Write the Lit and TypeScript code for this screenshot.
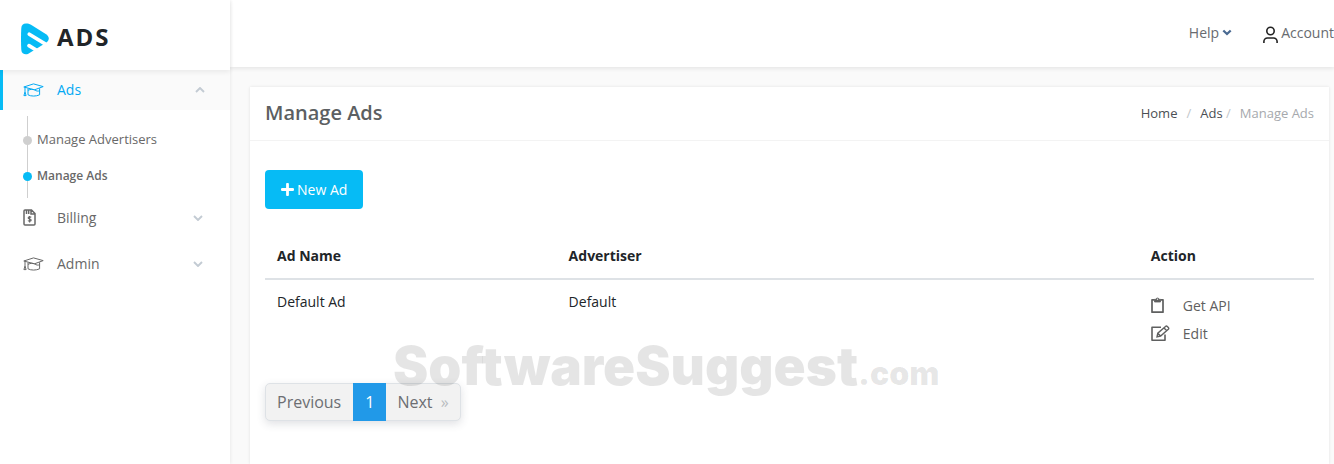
import { LitElement, html, css, svg } from "lit";
import { customElement, property } from "lit/decorators.js";

const iconPaths: Record<string, { box: string; w: number; h: number; body: unknown }> = {
  cap: {
    box: "0 0 21 14", w: 21, h: 14,
    body: svg`<path d="M.8 4 10.500.9l9.700 2.700-8.700 3.200z"/><path d="M5 5.500v6.300c3 1.700 8 1.700 11.600 0V5.300"/><path d="M5 7.300c2.800-1.300 4.500-1 6.500-.5 2 1.500 3.500 1.500 5.100 1"/><path d="M2 4.400v4.600M2 9 .9 12.600h2.200z"/>`,
  },
  bill: {
    box: "0 0 13 17", w: 13, h: 17,
    body: svg`<path d="M2 1h6.500L12 4.500V15a1 1 0 0 1-1 1H2a1 1 0 0 1-1-1V2a1 1 0 0 1 1-1zM8 1v4h4M3.500 1.500v3.500M5.700 1.500v3.500" stroke-width="1.500"/><path d="M8.200 8.300c-.5-.7-3-.8-3 .6s3 .8 3 2.200-2.500 1.300-3.200.4M6.600 7v6.500" stroke-width="1.200"/>`,
  },
  down: { box: "0 0 10 6", w: 10, h: 6, body: svg`<path d="M1 1l4 4 4-4" stroke-width="1.900"/>` },
  up: { box: "0 0 10 6", w: 10, h: 6, body: svg`<path d="M1 5l4-4 4 4" stroke-width="1.900"/>` },
  caret: { box: "0 0 10 7", w: 10, h: 7, body: svg`<path d="M1.300 1.500 5 5l3.700-3.500" stroke-width="2.300"/>` },
  user: {
    box: "0 0 17 18", w: 17, h: 18,
    body: svg`<circle cx="8.500" cy="5" r="3.700" stroke-width="1.600"/><path d="M1.900 17v-1.500a3.500 3.500 0 0 1 3.500-3.500h6.200a3.500 3.500 0 0 1 3.500 3.500V17" stroke-width="1.600"/>`,
  },
  plus: { box: "0 0 13 13", w: 13, h: 13, body: svg`<path d="M6.500 1.200v10.600M1.200 6.500h10.600" stroke-width="2.800" stroke-linecap="round"/>` },
  clipboard: {
    box: "0 0 13 16", w: 13, h: 16,
    body: svg`<path d="M3.500 2.800H1v12.400h11V2.800H9.500" stroke-width="1.700" stroke-linejoin="round"/><path d="M3.500 2.300h1.700a1.300 1.300 0 0 1 2.600 0h1.700v2.700h-6z" fill="currentColor" stroke-width=".8"/><circle cx="6.500" cy="2.200" r=".6" fill="#fff" stroke="none"/>`,
  },
  edit: {
    box: "0 0 19 16", w: 19, h: 16,
    body: svg`<path d="M10 2.200H1v13h13V9.500" stroke-width="1.600" stroke-linejoin="round"/><path d="M6 11.800l.8-3.600L14.500 1.500a1.300 1.300 0 0 1 1.800 0l1 1a1.300 1.300 0 0 1 0 1.800L9.600 11zM13 3l2.800 2.800M6.800 8.200 9.600 11" stroke-width="1.400"/>`,
  },
};

@customElement("ui-icon")
class UiIcon extends LitElement {
  @property() name = "";
  static styles = css`
    :host { display: inline-flex; flex: none; }
    svg { display: block; fill: none; stroke: currentColor; stroke-width: 1; }
  `;
  render() {
    const i = iconPaths[this.name];
    return i ? html`<svg width=${i.w} height=${i.h} viewBox=${i.box} aria-hidden="true">${i.body}</svg>` : null;
  }
}

@customElement("side-menu")
class SideMenu extends LitElement {
  static styles = css`
    :host { display: block; position: relative; z-index: 1; background: #fff; box-shadow: 1px 0 3px rgba(0, 0, 0, 0.06); }
    a { color: inherit; text-decoration: none; }
    ul { list-style: none; margin: 0; padding: 0; }
    .brand { display: flex; align-items: center; gap: 8px; height: 70px; padding: 0 21px; box-sizing: border-box; color: #212529; box-shadow: 0 2px 5px rgba(0, 0, 0, 0.07); position: relative; }
    .mark { margin-top: 8px; }
    .name { font-size: 24px; font-weight: 700; letter-spacing: 2px; margin-top: 3px; }
    .menu { display: grid; gap: 6px; }
    .link { display: grid; grid-template-columns: 34px 1fr auto; align-items: center; height: 40px; box-sizing: border-box; padding: 0 27px 1px 23px; font-size: 14px; color: #686868; }
    .chev { color: #c3cbd3; }
    .active { background: #fafafa; color: #03a9f3; font-weight: 500; padding-left: 20px; padding-right: 25px; border-left: 3px solid #06bbf5; }
    .sub { margin: 6px 0 -6px 27px; padding: 5px 0; border-left: 1px solid #cfcfcf; font-size: 13px; color: #686868; }
    .item { display: flex; align-items: center; gap: 5px; height: 36px; margin-left: -5px; }
    .dot { width: 9px; height: 9px; border-radius: 50%; background: #cfcfcf; margin-top: 2px; }
    .current { font-size: 12px; font-weight: 600; }
    .current .dot { background: #06bbf5; }
  `;
  render() {
    return html`
      <a class="brand" href="#">
        <svg class="mark" width="28" height="32" viewBox="0 0 28 32" aria-hidden="true">
          <path fill="#06bbf5" d="M5 .4C2 .4.500 2 .300 5c-.400 7-.400 15 0 22 .300 4 4 5.200 7 3.800L25.500 19.500c3-2.200 3-5.600 0-7.900L10 1.700C8.500.8 7 .4 5 .4z"/>
          <path fill="none" stroke="#fff" stroke-width="3.600" stroke-linecap="round" d="M8.300 11.200 27 22.600M8 22.600 20 30"/>
        </svg>
        <span class="name">ADS</span>
      </a>
      <nav>
        <ul class="menu">
          <li>
            <a class="link active" href="#"><ui-icon name="cap"></ui-icon>Ads<ui-icon class="chev" name="up"></ui-icon></a>
            <ul class="sub">
              <li><a class="item" href="#"><span class="dot"></span>Manage Advertisers</a></li>
              <li><a class="item current" href="#" aria-current="page"><span class="dot"></span>Manage Ads</a></li>
            </ul>
          </li>
          <li><a class="link" href="#"><ui-icon name="bill"></ui-icon>Billing<ui-icon class="chev" name="down"></ui-icon></a></li>
          <li><a class="link" href="#"><ui-icon name="cap"></ui-icon>Admin<ui-icon class="chev" name="down"></ui-icon></a></li>
        </ul>
      </nav>
    `;
  }
}

@customElement("app-root")
class AppRoot extends LitElement {
  private ads = [{ name: "Default Ad", advertiser: "Default" }];

  static styles = css`
    :host { display: grid; grid-template-columns: 230px minmax(0, 1fr); min-height: 100vh; position: relative; overflow: hidden; background: #fafafa; font-family: "Open Sans", sans-serif; font-size: 14px; line-height: 21px; color: #212529; }
    a { color: inherit; text-decoration: none; }
    .page { display: flex; flex-direction: column; }
    .topbar { display: flex; justify-content: flex-end; align-items: center; gap: 30px; height: 67px; box-sizing: border-box; padding-bottom: 2px; background: #fff; color: #686b70; box-shadow: 0 2px 4px rgba(0, 0, 0, 0.08); }
    .toplink { display: flex; align-items: center; gap: 3px; }
    .toplink ui-icon { color: #4a6a92; }
    .account { gap: 2px; }
    .account ui-icon { color: #222; margin-top: 4px; }
    .card { flex: 1; margin: 20px 5px 0 20px; background: #fff; box-shadow: 0 0 3px rgba(0, 0, 0, 0.1); }
    .head { display: flex; align-items: center; justify-content: space-between; height: 53px; padding: 0 15px; border-bottom: 1px solid #f3f3f3; }
    .title { margin: 0; padding-bottom: 2px; font-size: 20px; font-weight: 600; color: #5c5f62; }
    .crumbs { display: flex; gap: 9px; margin: 0; padding: 0; list-style: none; font-size: 13px; color: #4b4f54; }
    .sep { color: #c2c7cb; }
    .here { color: #a6a9ad; }
    .body { padding: 29px 15px; }
    .new { display: flex; align-items: center; gap: 3px; height: 39px; padding: 0 16px; border: 0; border-radius: 4px; background: #06bbf5; color: #fff; font: 500 14px/21px "Open Sans", sans-serif; }
    table { width: 100%; margin: 24px 0 23px; border-collapse: collapse; table-layout: fixed; }
    th, td { box-sizing: border-box; text-align: left; vertical-align: top; }
    th { padding: 12px; font-weight: 700; border-bottom: 2px solid #dee2e6; }
    td { padding: 11px 12px 13px; }
    .c1 { width: 27.8%; }
    .c3 { width: 16.7%; }
    .action { display: grid; grid-template-columns: 32px 1fr; align-items: center; height: 28px; color: #5f6060; }
    .pager { display: inline-flex; height: 38px; box-sizing: border-box; border: 1px solid #dee2e6; border-radius: 5px; background: #f2f2f2; color: #6c6e72; font-size: 16px; line-height: 36px; box-shadow: 0 3px 9px rgba(60, 70, 90, 0.16); }
    .pg { padding: 0 11px; }
    .pg:first-child { padding-right: 12px; }
    .num { margin: -1px 0; padding: 0 12px; line-height: 38px; background: #2199e8; color: #fff; }
    .more { color: #b9bcc0; margin-left: 4px; }
    .watermark { position: absolute; top: 336px; left: 393px; font: 900 53px/60px Inter, sans-serif; color: rgba(0, 0, 0, 0.1); pointer-events: none; white-space: nowrap; }
    .tld { font-size: 32px; }
  `;

  render() {
    return html`
      <side-menu></side-menu>
      <div class="page">
        <header class="topbar">
          <a class="toplink" href="#">Help<ui-icon name="caret"></ui-icon></a>
          <a class="toplink account" href="#"><ui-icon name="user"></ui-icon>Account</a>
        </header>
        <main class="card">
          <div class="head">
            <h1 class="title">Manage Ads</h1>
            <ol class="crumbs">
              <li><a href="#">Home</a></li>
              <li class="sep">/</li>
              <li><a href="#">Ads</a> <span class="sep">/</span></li>
              <li class="here">Manage Ads</li>
            </ol>
          </div>
          <div class="body">
            <button class="new" type="button"><ui-icon name="plus"></ui-icon>New Ad</button>
            <table>
              <thead>
                <tr><th class="c1" scope="col">Ad Name</th><th scope="col">Advertiser</th><th class="c3" scope="col">Action</th></tr>
              </thead>
              <tbody>
                ${this.ads.map((ad) => html`
                  <tr>
                    <td>${ad.name}</td>
                    <td>${ad.advertiser}</td>
                    <td>
                      <a class="action" href="#"><ui-icon name="clipboard"></ui-icon>Get API</a>
                      <a class="action" href="#"><ui-icon name="edit"></ui-icon>Edit</a>
                    </td>
                  </tr>`)}
              </tbody>
            </table>
            <nav class="pager" aria-label="Pages">
              <a class="pg" href="#">Previous</a>
              <a class="num" href="#" aria-current="page">1</a>
              <a class="pg" href="#">Next <span class="more">»</span></a>
            </nav>
          </div>
        </main>
      </div>
      <div class="watermark">SoftwareSuggest<span class="tld">.com</span></div>
    `;
  }
}
